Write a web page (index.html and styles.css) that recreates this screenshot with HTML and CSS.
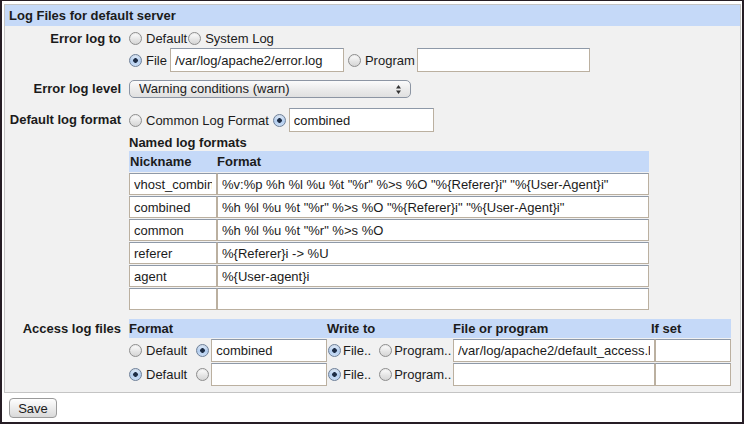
FILE: index.html
```html
<!DOCTYPE html>
<html>
<head>
<meta charset="utf-8">
<title>Log Files</title>
<link rel="stylesheet" href="styles.css">
</head>
<body>
<div class="frame">
  <div class="panel">
    <div class="panel-title">Log Files for default server</div>
    <div class="panel-body">

      <div class="field f-errto">
        <div class="label l17">Error log to</div>
        <div class="control">
          <div class="line l1">
            <label class="opt"><input type="radio" name="errto" class="radio">Default</label>
            <label class="opt opt-tight"><input type="radio" name="errto" class="radio">System Log</label>
          </div>
          <div class="line l2">
            <label class="opt"><input type="radio" name="errto" class="radio" checked>File</label>
            <input type="text" class="text w-errfile" value="/var/log/apache2/error.log">
            <label class="opt opt-prog"><input type="radio" name="errto" class="radio">Program</label>
            <input type="text" class="text w-errprog" value="">
          </div>
        </div>
      </div>

      <div class="field f-level">
        <div class="label l18">Error log level</div>
        <div class="control">
          <div class="select-wrap">
            <select class="select">
              <option>Warning conditions (warn)</option>
            </select>
            <svg class="select-arrows" width="7" height="11" viewBox="0 0 7 11"><path d="M3.5 1 L6 4.5 L1 4.5 Z M3.5 10 L6 6.5 L1 6.5 Z" fill="#333"/></svg>
          </div>
        </div>
      </div>

      <div class="field f-deffmt">
        <div class="label l24">Default log format</div>
        <div class="control">
          <div class="line l2">
            <label class="opt"><input type="radio" name="deffmt" class="radio">Common Log Format</label>
            <input type="radio" name="deffmt" class="radio r-deffmt" checked>
            <input type="text" class="text w-deffmt" value="combined">
          </div>
        </div>
      </div>

      <div class="field f-named">
        <div class="label"></div>
        <div class="control">
          <div class="subtitle">Named log formats</div>
          <div class="named">
            <div class="th">Nickname</div>
            <div class="th">Format</div>
            <input type="text" class="cell" value="vhost_combined">
            <input type="text" class="cell" value="%v:%p %h %l %u %t &quot;%r&quot; %&gt;s %O &quot;%{Referer}i&quot; &quot;%{User-Agent}i&quot;">
            <input type="text" class="cell" value="combined">
            <input type="text" class="cell" value="%h %l %u %t &quot;%r&quot; %&gt;s %O &quot;%{Referer}i&quot; &quot;%{User-Agent}i&quot;">
            <input type="text" class="cell" value="common">
            <input type="text" class="cell" value="%h %l %u %t &quot;%r&quot; %&gt;s %O">
            <input type="text" class="cell" value="referer">
            <input type="text" class="cell" value="%{Referer}i -&gt; %U">
            <input type="text" class="cell" value="agent">
            <input type="text" class="cell" value="%{User-agent}i">
            <input type="text" class="cell" value="">
            <input type="text" class="cell" value="">
          </div>
        </div>
      </div>

      <div class="field f-access">
        <div class="label l19">Access log files</div>
        <div class="control">
          <div class="access">
            <div class="th">Format</div>
            <div class="th">Write to</div>
            <div class="th">File or program</div>
            <div class="th th-ifset">If set</div>

            <div class="acell fmt">
              <label class="opt"><input type="radio" name="a1f" class="radio">Default</label>
              <input type="radio" name="a1f" class="radio r-fmt" checked>
              <input type="text" class="cell w-fmt" value="combined">
            </div>
            <div class="acell wto">
              <label class="opt opt-file"><input type="radio" name="a1w" class="radio" checked>File..</label>
              <label class="opt opt-progs"><input type="radio" name="a1w" class="radio">Program..</label>
            </div>
            <input type="text" class="cell" value="/var/log/apache2/default_access.log">
            <input type="text" class="cell" value="">

            <div class="acell fmt">
              <label class="opt"><input type="radio" name="a2f" class="radio" checked>Default</label>
              <input type="radio" name="a2f" class="radio r-fmt">
              <input type="text" class="cell w-fmt" value="">
            </div>
            <div class="acell wto">
              <label class="opt opt-file"><input type="radio" name="a2w" class="radio" checked>File..</label>
              <label class="opt opt-progs"><input type="radio" name="a2w" class="radio">Program..</label>
            </div>
            <input type="text" class="cell" value="">
            <input type="text" class="cell" value="">
          </div>
        </div>
      </div>

    </div>
  </div>
  <button class="save" type="button">Save</button>
</div>
</body>
</html>
```

FILE: styles.css
```css
* {
  box-sizing: border-box;
}

html,
body {
  margin: 0;
  padding: 0;
  background: #ffffff;
}

body {
  font-family: "Liberation Sans", Arial, sans-serif;
  font-size: 13px;
  color: #1b1b1b;
}

.frame {
  width: 744px;
  height: 424px;
  border: 2px solid #261d25;
  border-top-width: 1px;
  padding: 3px 1px 0 2px;
  overflow: hidden;
}

.panel {
  border: 1px solid #c4c4c4;
  background: #f1f1f1;
}

.panel-title {
  background: #c5d9f8;
  font-weight: bold;
  height: 21px;
  line-height: 21px;
  padding-left: 4px;
}

.panel-body {
  padding: 0 0 6px 0;
}

.field {
  display: flex;
  column-gap: 8px;
}

.label {
  width: 116px;
  flex: none;
  text-align: right;
  font-weight: bold;
  white-space: nowrap;
}

.l17 { line-height: 17px; }
.l18 { line-height: 18px; }
.l19 { line-height: 19px; }
.l24 { line-height: 24px; }

.control {
  flex: 1;
  min-width: 0;
}

.f-errto { margin-top: 4px; }
.f-level { margin-top: 8px; }
.f-deffmt { margin-top: 10px; }
.f-named { margin-top: 2px; }
.f-access { margin-top: 9px; }

.line {
  display: flex;
  align-items: center;
}

.l1 {
  height: 17px;
}

.l2 {
  height: 24px;
}

.f-errto .l2 {
  margin-top: 1px;
}

.opt {
  display: inline-flex;
  align-items: center;
  gap: 4px;
  white-space: nowrap;
}

.opt-tight {
  margin-left: 1px;
}

.opt-prog {
  margin-left: 4px;
  margin-right: 2px;
}

/* radio buttons, Aqua style */
.radio {
  -webkit-appearance: none;
  appearance: none;
  width: 13px;
  height: 13px;
  margin: 0;
  flex: none;
  border-radius: 50%;
  border: 1px solid #8d8d8d;
  background: linear-gradient(#ffffff, #e4e4e4 60%, #d6d6d6);
  box-shadow: inset 0 1px 1px rgba(0, 0, 0, 0.08);
}

.radio:checked {
  border-color: #6d7f98;
  background:
    radial-gradient(circle at 50% 50%, #1d2c44 0, #1d2c44 2px, rgba(29, 44, 68, 0) 2.6px),
    linear-gradient(#e3eefb, #b3cdee 55%, #c9dcf4);
}

/* text inputs */
.text,
.cell {
  font-family: "Liberation Sans", Arial, sans-serif;
  font-size: 13px;
  color: #1b1b1b;
  background: #ffffff;
  border: 1px solid #bbb0a0;
  border-top-color: #8e99a8;
  border-radius: 0;
  padding: 0 4px;
  margin: 0;
  outline: none;
}

.text {
  height: 24px;
}

.w-errfile {
  margin-left: 3px;
  width: 174px;
}

.w-errprog {
  width: 173px;
}

.r-deffmt {
  margin-left: 4px;
  margin-right: 3px;
}

.w-deffmt {
  width: 145px;
}

/* select */
.select-wrap {
  position: relative;
  width: 282px;
  height: 18px;
}

.select {
  -webkit-appearance: none;
  appearance: none;
  width: 282px;
  height: 18px;
  margin: 0;
  border: 1px solid #8c95a3;
  border-radius: 5px;
  background: linear-gradient(#fbfbfb, #ececec 50%, #e0e0e0);
  font-family: "Liberation Sans", Arial, sans-serif;
  font-size: 13px;
  color: #1b1b1b;
  padding: 0 0 0 9px;
  line-height: 16px;
  outline: none;
}

.select-arrows {
  position: absolute;
  right: 9px;
  top: 4px;
}

/* named log formats */
.subtitle {
  font-weight: bold;
  line-height: 17px;
  height: 17px;
}

.named {
  display: grid;
  grid-template-columns: 88px 432px;
  grid-template-rows: 21px;
  grid-auto-rows: 22px;
  row-gap: 1px;
  width: 520px;
}

.th {
  background: #c5d9f8;
  font-weight: bold;
  line-height: 20px;
  white-space: nowrap;
}

.named .th:first-child {
  padding-left: 1px;
}

.named .th {
  line-height: 21px;
}

.cell {
  width: 100%;
  height: 100%;
  min-width: 0;
}

/* access log files */
.access {
  display: grid;
  grid-template-columns: 198px 126px 202px 76px;
  grid-template-rows: 19px;
  grid-auto-rows: 23px;
  row-gap: 1px;
  width: 602px;
}

.access .th {
  line-height: 19px;
}

.th-ifset {
  margin-left: -4px;
}

.acell {
  display: flex;
  align-items: center;
  white-space: nowrap;
  overflow: hidden;
}

.r-fmt {
  margin-left: 9px;
  margin-right: 2px;
}

.w-fmt {
  width: 116px;
  height: 100%;
  flex: none;
}

.opt-file {
  margin-left: 1px;
  gap: 2px;
}

.opt-progs {
  margin-left: 8px;
  gap: 2px;
}

/* save button */
.save {
  display: block;
  margin: 5px 0 0 5px;
  height: 20px;
  width: 48px;
  padding: 0;
  border: 1px solid #9a9a9a;
  border-radius: 4px;
  background: linear-gradient(#fefefe, #ececec 50%, #d9d9d9);
  font-family: "Liberation Sans", Arial, sans-serif;
  font-size: 13px;
  color: #1b1b1b;
}
```
